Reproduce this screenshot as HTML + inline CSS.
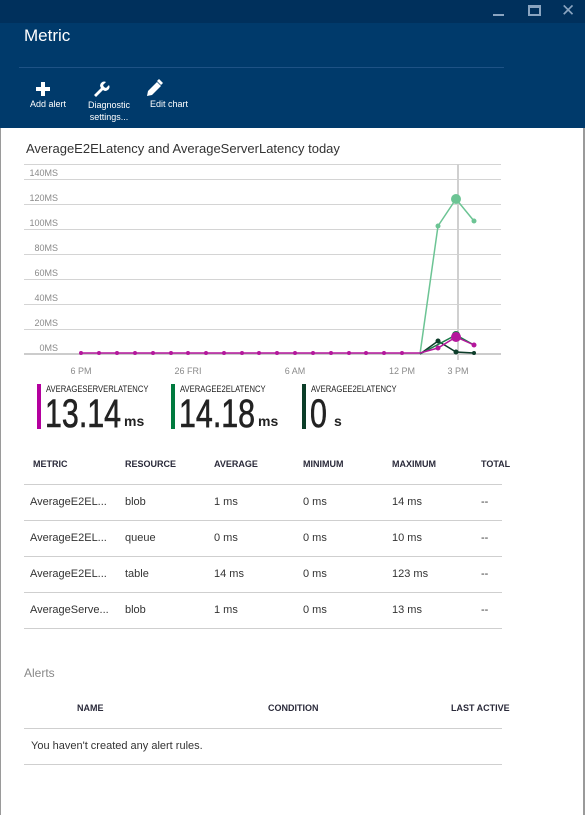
<!DOCTYPE html>
<html><head><style>
*{margin:0;padding:0;box-sizing:border-box}
body{width:585px;height:815px;background:#fff;font-family:"Liberation Sans",sans-serif;position:relative;overflow:hidden}
.a{position:absolute;white-space:nowrap}
.hdr{position:absolute;left:0;top:0;width:585px;height:128px;background:#003a6b}
.top{position:absolute;left:0;top:0;width:585px;height:23px;background:#00305c}
.th{font-size:9px;font-weight:bold;color:#2a2a3a}
.td{font-size:11px;color:#333}
.hl{position:absolute;left:24px;width:478px;height:1px;background:#cfcfcf}
.lg{font-size:9px;color:#222;transform:scaleX(0.85);transform-origin:left}
.big{font-size:40px;color:#222;transform:scaleX(0.76);transform-origin:left;line-height:40px;-webkit-text-stroke:0.6px #222}
.un{font-size:14px;font-weight:bold;color:#222}
</style></head><body>
<div class="hdr"></div><div class="top"></div>
<div class="a" style="left:0;top:128px;width:1px;height:687px;background:#9a9a9a"></div>
<div class="a" style="left:583px;top:128px;width:2px;height:687px;background:#9a9a9a"></div>
<div class="a" style="left:493px;top:14px;width:11px;height:2px;background:#8aa4c0"></div>
<div class="a" style="left:528px;top:5px;width:13px;height:11px;border:2px solid #8aa4c0;border-top-width:3px"></div>
<div class="a" style="left:561px;top:1px;font-size:17px;color:#8aa4c0">✕</div>
<div class="a" style="left:24px;top:26px;font-size:17px;color:#fff">Metric</div>
<div class="a" style="left:19px;top:67px;width:485px;height:1px;background:#1e5285"></div>
<svg class="a" style="left:0;top:78px" width="200" height="20">
<path d="M41 4h4v5h5v4h-5v5h-4v-5h-5v-4h5z" fill="#fff"/>
<path d="M94 17l7-7a4 4 0 0 1 5-6l-3 3 1 2 2 1 3-3a4 4 0 0 1-6 5l-7 7z" fill="#fff"/>
<path d="M147 18l1-5 9-9 4 4-9 9z M157 3l2-2 4 4-2 2z" fill="#fff"/>
</svg>
<div class="a" style="left:30px;top:99px;font-size:9px;color:#fff">Add alert</div>
<div class="a" style="left:88px;top:99px;font-size:9px;color:#fff;text-align:center;line-height:12px">Diagnostic<br>settings...</div>
<div class="a" style="left:150px;top:99px;font-size:9px;color:#fff">Edit chart</div>

<div class="a" style="left:26px;top:141px;font-size:13px;color:#333">AverageE2ELatency and AverageServerLatency today</div>
<svg class="a" style="left:0;top:160px" width="585" height="230">
<g stroke="#d4d4d4" stroke-width="1">
<line x1="24" x2="501" y1="4.5" y2="4.5"/><line x1="24" x2="501" y1="19.5" y2="19.5"/><line x1="24" x2="501" y1="44.5" y2="44.5"/><line x1="24" x2="501" y1="69.5" y2="69.5"/><line x1="24" x2="501" y1="94.5" y2="94.5"/><line x1="24" x2="501" y1="119.5" y2="119.5"/><line x1="24" x2="501" y1="144.5" y2="144.5"/><line x1="24" x2="501" y1="169.5" y2="169.5"/>
<line x1="24" x2="501" y1="194" y2="194" stroke="#bbb" stroke-width="1.5"/>
<line x1="458" x2="458" y1="4" y2="200" stroke="#d0d0d0" stroke-width="2"/>
</g>
<g font-size="9" fill="#8a8a8a" text-anchor="end" font-family="Liberation Sans">
<text x="58" y="16">140MS</text><text x="58" y="41">120MS</text><text x="58" y="66">100MS</text><text x="58" y="91">80MS</text><text x="58" y="116">60MS</text><text x="58" y="141">40MS</text><text x="58" y="166">20MS</text><text x="58" y="191">0MS</text>
</g>
<g font-size="9" fill="#8a8a8a" text-anchor="middle" font-family="Liberation Sans">
<text x="81" y="214">6 PM</text><text x="188" y="214">26 FRI</text><text x="295" y="214">6 AM</text><text x="402" y="214">12 PM</text><text x="458" y="214">3 PM</text>
</g>
<polyline points="420,194 438,66 456,39 474,61" fill="none" stroke="#6cc494" stroke-width="1.5"/>
<circle cx="438" cy="66" r="2.5" fill="#6cc494"/><circle cx="456" cy="39" r="5" fill="#6cc494"/><circle cx="474" cy="61" r="2.5" fill="#6cc494"/>
<polyline points="420,194 438,181 456,192 474,193" fill="none" stroke="#0d3d2a" stroke-width="1.5"/>
<circle cx="438" cy="181" r="2.5" fill="#0d3d2a"/><circle cx="456" cy="192" r="2.5" fill="#0d3d2a"/><circle cx="474" cy="193" r="2" fill="#0d3d2a"/>
<polyline points="420,194 456,175 474,185" fill="none" stroke="#1a7a48" stroke-width="1.5"/>
<circle cx="456" cy="175" r="4" fill="#1a7a48"/>
<polyline points="81,193 420,193 438,188 456,177 474,185" fill="none" stroke="#b4179c" stroke-width="1.5"/>
<g fill="#b4179c">
<circle cx="81" cy="193" r="2"/><circle cx="99" cy="193" r="2"/><circle cx="117" cy="193" r="2"/><circle cx="135" cy="193" r="2"/><circle cx="153" cy="193" r="2"/><circle cx="171" cy="193" r="2"/><circle cx="188" cy="193" r="2"/><circle cx="206" cy="193" r="2"/><circle cx="224" cy="193" r="2"/><circle cx="242" cy="193" r="2"/><circle cx="259" cy="193" r="2"/><circle cx="277" cy="193" r="2"/><circle cx="295" cy="193" r="2"/><circle cx="313" cy="193" r="2"/><circle cx="331" cy="193" r="2"/><circle cx="349" cy="193" r="2"/><circle cx="366" cy="193" r="2"/><circle cx="384" cy="193" r="2"/><circle cx="402" cy="193" r="2"/>
<circle cx="438" cy="188" r="2.5"/><circle cx="456" cy="177" r="5"/><circle cx="474" cy="185" r="2.5"/>
</g>
</svg>

<div class="a" style="left:37px;top:384px;width:4px;height:45px;background:#b4009e"></div>
<div class="a lg" style="left:46px;top:384px">AVERAGESERVERLATENCY</div>
<div class="a big" style="left:45px;top:394px">13.14</div>
<div class="a un" style="left:124px;top:413px">ms</div>
<div class="a" style="left:171px;top:384px;width:4px;height:45px;background:#007a3e"></div>
<div class="a lg" style="left:180px;top:384px">AVERAGEE2ELATENCY</div>
<div class="a big" style="left:179px;top:394px">14.18</div>
<div class="a un" style="left:258px;top:413px">ms</div>
<div class="a" style="left:302px;top:384px;width:4px;height:45px;background:#0b3d28"></div>
<div class="a lg" style="left:311px;top:384px">AVERAGEE2ELATENCY</div>
<div class="a big" style="left:310px;top:394px">0</div>
<div class="a un" style="left:334px;top:413px">s</div>

<div class="a th" style="left:33px;top:459px">METRIC</div>
<div class="a th" style="left:125px;top:459px">RESOURCE</div>
<div class="a th" style="left:214px;top:459px">AVERAGE</div>
<div class="a th" style="left:303px;top:459px">MINIMUM</div>
<div class="a th" style="left:392px;top:459px">MAXIMUM</div>
<div class="a th" style="left:481px;top:459px">TOTAL</div>
<div class="hl" style="top:484px"></div><div class="hl" style="top:520px"></div><div class="hl" style="top:556px"></div><div class="hl" style="top:592px"></div><div class="hl" style="top:628px"></div>

<div class="a td" style="left:30px;top:496px">AverageE2EL...</div><div class="a td" style="left:125px;top:496px">blob</div><div class="a td" style="left:214px;top:496px">1 ms</div><div class="a td" style="left:303px;top:496px">0 ms</div><div class="a td" style="left:392px;top:496px">14 ms</div><div class="a td" style="left:481px;top:496px">--</div>
<div class="a td" style="left:30px;top:532px">AverageE2EL...</div><div class="a td" style="left:125px;top:532px">queue</div><div class="a td" style="left:214px;top:532px">0 ms</div><div class="a td" style="left:303px;top:532px">0 ms</div><div class="a td" style="left:392px;top:532px">10 ms</div><div class="a td" style="left:481px;top:532px">--</div>
<div class="a td" style="left:30px;top:568px">AverageE2EL...</div><div class="a td" style="left:125px;top:568px">table</div><div class="a td" style="left:214px;top:568px">14 ms</div><div class="a td" style="left:303px;top:568px">0 ms</div><div class="a td" style="left:392px;top:568px">123 ms</div><div class="a td" style="left:481px;top:568px">--</div>
<div class="a td" style="left:30px;top:604px">AverageServe...</div><div class="a td" style="left:125px;top:604px">blob</div><div class="a td" style="left:214px;top:604px">1 ms</div><div class="a td" style="left:303px;top:604px">0 ms</div><div class="a td" style="left:392px;top:604px">13 ms</div><div class="a td" style="left:481px;top:604px">--</div>

<div class="a" style="left:24px;top:666px;font-size:12px;color:#888">Alerts</div>
<div class="a th" style="left:77px;top:703px">NAME</div>
<div class="a th" style="left:268px;top:703px">CONDITION</div>
<div class="a th" style="left:451px;top:703px">LAST ACTIVE</div>
<div class="hl" style="top:728px"></div>
<div class="a td" style="left:31px;top:740px">You haven't created any alert rules.</div>
<div class="hl" style="top:764px"></div>
</body></html>
